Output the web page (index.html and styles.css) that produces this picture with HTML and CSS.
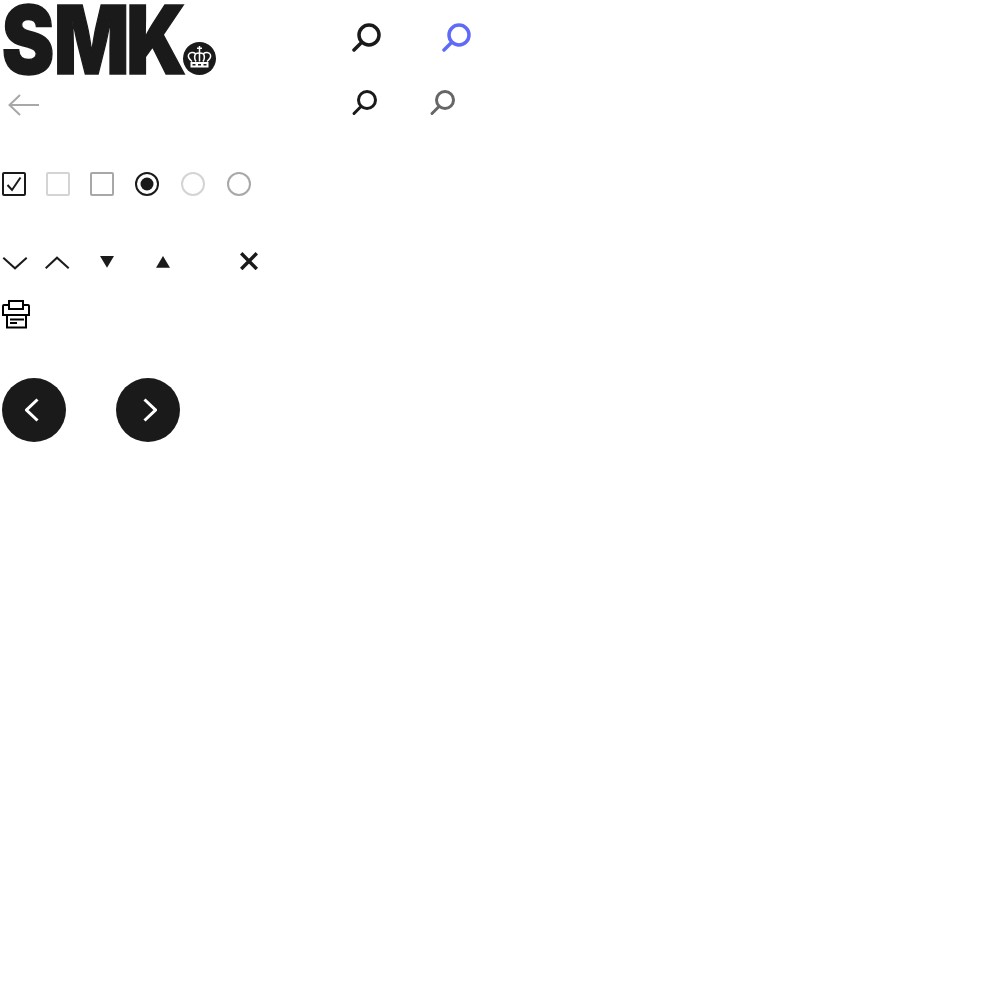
FILE: index.html
```html
<!DOCTYPE html>
<html lang="da">
<head>
    <meta charset="UTF-8">
    <title>SMK icons</title>
    <link rel="stylesheet" href="styles.css">
</head>
<body>
    <div class="top">
        <div class="brand">
            <!-- Logo: tekst + krone -->
            <svg class="logo" width="220" height="80" viewBox="0 0 220 80">
                <text class="logo-text" transform="scale(0.83 1)" x="2 65 152" y="73.500">SMK</text>
                <circle cx="199.500" cy="58.500" r="16.500" fill="#1a1a1a"/>
                <g class="crown">
                    <path class="cross" d="M199.500 46v7M197 48.300h5"/>
                    <path d="M192 61.500c-3-2.500-4.300-5-3.300-7 1.200-2.300 4.800-2.500 7-.7 1.500-1 6-1 7.600 0 2.200-1.800 5.800-1.600 7 .7 1 2-.3 4.500-3.300 7"/>
                    <path d="M195.500 53.800c-1.300 2.500-1 5.200.5 7.700M203.500 53.800c1.300 2.500 1 5.200-.5 7.700M199.500 53v8.500"/>
                </g>
                <rect class="crown-base" x="190.500" y="62" width="18" height="5.500"/>
                <path class="crown-dots" d="M192.500 64.800h3M198 64.800h3M203.500 64.800h3"/>
            </svg>
            <svg class="back" width="32" height="22" viewBox="0 0 32 22">
                <path class="line gray" d="M12 1 1.500 11 12 21M1.500 11H31"/>
            </svg>
        </div>
        <div class="searches">
            <div class="search-row large">
                <svg width="32" height="32" viewBox="0 0 32 32"><path class="glass dark" d="M19 5a10 10 0 1 1 0 20 10 10 0 0 1 0-20M11.500 22.500 4 30"/></svg>
                <svg width="32" height="32" viewBox="0 0 32 32"><path class="glass blue" d="M19 5a10 10 0 1 1 0 20 10 10 0 0 1 0-20M11.500 22.500 4 30"/></svg>
            </div>
            <div class="search-row small">
                <svg width="30" height="28" viewBox="0 0 30 28"><path class="glass thin dark" d="M17 3.500a8.500 8.500 0 1 1 0 17 8.500 8.500 0 0 1 0-17M10.500 19 4 25.500"/></svg>
                <svg width="30" height="28" viewBox="0 0 30 28"><path class="glass thin mid" d="M17 3.500a8.500 8.500 0 1 1 0 17 8.500 8.500 0 0 1 0-17M10.500 19 4 25.500"/></svg>
            </div>
        </div>
    </div>

    <!-- Checkbox + radio -->
    <div class="controls">
        <svg width="24" height="24" viewBox="0 0 24 24">
            <rect class="line dark" x="1" y="1" width="22" height="22" rx="1"/>
            <path class="line dark" d="M5.500 13 10 18 18.500 5.500"/>
        </svg>
        <svg width="24" height="24" viewBox="0 0 24 24"><rect class="line light" x="1" y="1" width="22" height="22" rx="1"/></svg>
        <svg width="24" height="24" viewBox="0 0 24 24"><rect class="line gray" x="1" y="1" width="22" height="22" rx="1"/></svg>
        <svg width="26" height="24" viewBox="0 0 26 24">
            <circle class="line dark" cx="13" cy="12" r="11"/>
            <circle class="solid" cx="13" cy="12" r="6.500"/>
        </svg>
        <svg width="26" height="24" viewBox="0 0 26 24"><circle class="line light" cx="13" cy="12" r="11"/></svg>
        <svg width="26" height="24" viewBox="0 0 26 24"><circle class="line gray" cx="13" cy="12" r="11"/></svg>
    </div>

    <!-- Pile + luk -->
    <div class="arrows">
        <svg width="26" height="18" viewBox="0 0 26 18"><path class="line dark" d="M1.300 5.700 13 16.300 24.700 5.700"/></svg>
        <svg width="26" height="18" viewBox="0 0 26 18"><path class="line dark" d="M1.700 16.300 13 5.700 24.700 16.300"/></svg>
        <svg width="18" height="18" viewBox="0 0 18 18"><path class="solid" d="M2 4h14L9 15.700z"/></svg>
        <svg width="18" height="18" viewBox="0 0 18 18"><path class="solid" d="M2 15.700h14L9 4z"/></svg>
        <svg width="18" height="18" viewBox="0 0 18 18"><path class="line dark heavy" d="M1.200 1.300 16.800 17M16.800 1.300 1.200 17"/></svg>
    </div>

    <svg class="printer" width="28" height="29" viewBox="0 0 28 29">
        <path class="line black" d="M7 1h14v8H7zM7 5H2c-.6 0-1 .4-1 1v9h26V6c0-.6-.4-1-1-1h-5M5 15v12.500h19V15M8 19.500h14M8 23h7"/>
    </svg>

    <div class="pager">
        <button class="round prev">
            <svg width="14" height="24" viewBox="0 0 14 24"><path class="chev" d="M12.500 1.500 1.500 12 12.500 22.500"/></svg>
        </button>
        <button class="round next">
            <svg width="14" height="24" viewBox="0 0 14 24"><path class="chev" d="M1.500 1.500 12.500 12 1.500 22.500"/></svg>
        </button>
    </div>
</body>
</html>
```

FILE: styles.css
```css
/* Generelt */
body {
    margin: 0;
    background-color: #fff;
    font-family: "Liberation Sans", Arial, sans-serif;
}

svg {
    display: block;
    flex: none;
}

/* Top: logo og soegeikoner */
.top {
    display: flex;
    height: 116px;
}

.brand {
    width: 350px;
}

.logo-text {
    font-family: "Inter", "Liberation Sans", sans-serif;
    font-size: 95px;
    font-weight: 900;
    fill: #1a1a1a;
    stroke: #1a1a1a;
    stroke-width: 1.5px;
}

.crown path {
    fill: none;
    stroke: #fff;
    stroke-width: 1.500px;
}

.crown-base {
    fill: #fff;
}

.crown-dots {
    fill: none;
    stroke: #1a1a1a;
    stroke-width: 1.600px;
}

.back {
    margin: 14px 0 0 8px;
}

.search-row {
    display: flex;
}

.search-row.large {
    gap: 58px;
    padding-top: 20px;
}

.search-row.small {
    gap: 48px;
    margin-top: 36px;
}

.glass {
    fill: none;
    stroke-width: 3.500px;
    stroke-linecap: round;
}

.glass.thin {
    stroke-width: 3px;
}

.glass.dark {
    stroke: #1a1a1a;
}

.glass.blue {
    stroke: #5f6bf8;
}

.glass.mid {
    stroke: #666;
}

/* Linjer */
.line {
    fill: none;
    stroke-width: 2px;
}

.line.dark {
    stroke: #1a1a1a;
}

.line.gray {
    stroke: #a8a8a8;
}

.line.light {
    stroke: #d4d4d4;
}

.line.black {
    stroke: #000;
}

.line.heavy {
    stroke-width: 3.500px;
}

.solid {
    fill: #1a1a1a;
}

.controls {
    display: flex;
    gap: 20px;
    margin-top: 56px;
    padding-left: 2px;
}

.arrows {
    display: grid;
    grid-template-columns: 42px 54px 56px 86px 18px;
    margin-top: 56px;
    padding-left: 2px;
}

.printer {
    margin: 30px 0 0 2px;
}

/* Runde knapper */
.pager {
    display: flex;
    gap: 50px;
    margin-top: 49px;
    padding-left: 2px;
}

.round {
    display: flex;
    align-items: center;
    justify-content: center;
    width: 64px;
    height: 64px;
    padding: 0;
    border: 0;
    border-radius: 50%;
    background-color: #1a1a1a;
}

.round.prev svg {
    margin-right: 4px;
}

.round.next svg {
    margin-left: 4px;
}

.chev {
    fill: none;
    stroke: #fff;
    stroke-width: 3px;
}
```
